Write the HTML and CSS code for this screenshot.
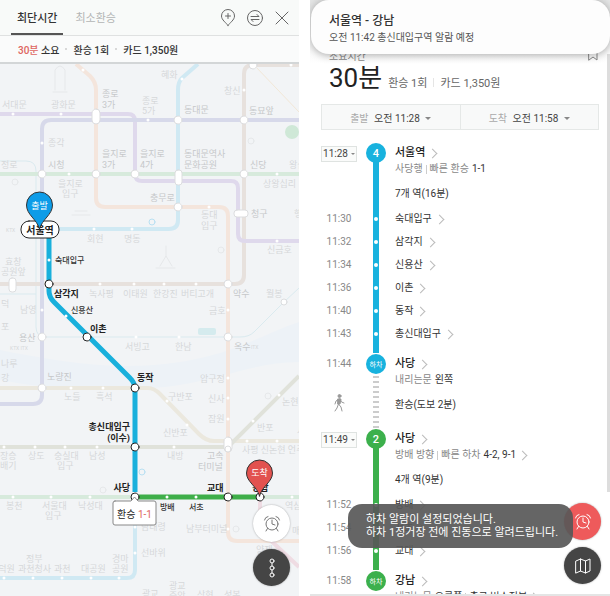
FILE: index.html
```html
<!DOCTYPE html>
<html lang="ko">
<head>
<meta charset="utf-8">
<meta name="viewport" content="width=device-width, initial-scale=1">
<title>지하철 경로</title>
<link rel="stylesheet" href="styles.css">
</head>
<body>
<main class="app">
  <section class="panel map-panel">
    <header class="tabs">
      <nav class="tab-list">
        <button class="tab is-active" type="button">최단시간</button>
        <button class="tab" type="button">최소환승</button>
      </nav>
      <div class="tools">
        <button class="tool" type="button" aria-label="경유지 추가">
          <svg width="16" height="18" viewBox="0 0 16 18"><path d="M8 16.500 C6 13.500 1.500 11 1.500 7 A6.500 6.500 0 0 1 14.500 7 C14.500 11 10 13.500 8 16.500Z M8 4.500v5M5.500 7h5"/></svg>
        </button>
        <button class="tool" type="button" aria-label="출발 도착 바꾸기">
          <svg width="18" height="18" viewBox="0 0 18 18"><circle cx="9" cy="9" r="7.500"/><path d="M5 7.500h8l-2-2M13 10.500H5l2 2"/></svg>
        </button>
        <button class="tool" type="button" aria-label="닫기">
          <svg width="16" height="16" viewBox="0 0 16 16"><path d="M2 2l12 12M14 2L2 14"/></svg>
        </button>
      </div>
    </header>
    <p class="summary"><span><em>30분</em> 소요</span><i class="dot"></i><span>환승 1회</span><i class="dot"></i><span>카드 1,350원</span></p>
    <div class="map">
      <svg class="map-canvas" viewBox="0 64 299 532" preserveAspectRatio="xMidYMin slice">
        <path class="river" d="M0 350C60 362 120 372 180 362S260 335 299 322V362C250 362 210 385 150 388S40 388 0 380Z"/>
        <g class="rails">
          <path class="thin aqua" d="M0 161H26Q36 161 36 171V327Q36 337 46 337H240Q249 337 254 332L284 302L299 288M0 294H36"/>
          <path class="thin gold" d="M255 66L299 112"/>
          <path class="brown" d="M299 65H253Q244 65 244 74V275Q244 284 235 284H0"/>
          <path class="violet" d="M0 114H128Q135 114 135 121V174Q135 181 142 181H231Q238 181 238 188V234Q238 241 245 241H299"/>
          <path class="indigo" d="M299 120H51Q42 120 42 129V395Q42 404 33 404H0"/>
          <path class="orange" d="M76 64L90 76Q96 82 96 90V198Q96 207 105 207H219Q228 207 228 216V532Q228 541 237 541H299"/>
          <path class="sky" d="M198 64L182 78Q178 82 178 90V220Q178 229 169 229H58"/>
          <path class="green" d="M0 174H299M0 497H135M260 497H299"/>
          <path class="sand" d="M0 388H148Q154 388 160 394L199 434Q206 441 214 441H299"/>
          <path class="olive" d="M0 447H228L299 376"/>
          <path class="sky" d="M135 497V570Q135 578 127 578H0"/>
          <path class="pink" d="M260 497V524Q260 530 266 536L299 567"/>
        </g>
        <g class="faint-stop">
          <rect x="92" y="109" width="8" height="15" rx="4"/><circle cx="178" cy="120" r="4"/><circle cx="244" cy="120" r="4"/><circle cx="253" cy="65" r="4"/>
          <circle cx="42" cy="174" r="4"/><circle cx="96" cy="174" r="4"/><circle cx="135" cy="174" r="4"/><rect x="175" y="170" width="7" height="15" rx="3"/><circle cx="244" cy="174" r="4"/>
          <circle cx="178" cy="207" r="4"/><rect x="234" y="210" width="14" height="7" rx="3"/><circle cx="228" cy="284" r="4"/><rect x="9" y="278" width="7" height="14" rx="3"/>
          <circle cx="42" cy="337" r="4"/><circle cx="228" cy="337" r="4"/><circle cx="42" cy="388" r="4"/><rect x="224" y="437" width="8" height="15" rx="4"/><circle cx="284" cy="302" r="3"/><circle cx="228" cy="449" r="3"/>
        </g>
        <path class="faint-dot" d="M13 114h0M61 114h0M148 120h0M83 70h0M182 79h0M244 90h0M291 65h0M42 143h0M69 174h0M277 174h0M209 207h0M94 229h0M132 229h0M277 241h0M100 284h0M134 284h0M164 284h0M196 284h0M42 310h0M228 310h0M228 378h0M228 398h0M228 419h0M136 337h0M179 337h0M71 388h0M103 388h0M167 401h0M187 425h0M253 421h0M279 395h0M247 441h0M277 441h0M4 447h0M35 447h0M65 447h0M97 447h0M174 447h0M13 497h0M51 497h0M90 497h0M292 497h0M135 527h0M135 553h0M4 578h0M33 578h0M62 578h0M91 578h0M119 578h0M228 529h0"/>
        <g class="landmark">
          <path d="M55 90V70q5-8 10 0V90M53 92h14M72 215h18M75 211h12M166 256v-10M160 266l6-10 6 10M156 268h19"/>
          <circle cx="251" cy="141" r="3"/><circle cx="221" cy="250" r="3"/><circle cx="15" cy="182" r="3"/><circle cx="103" cy="490" r="3"/><circle cx="268" cy="396" r="3"/><circle cx="236" cy="529" r="3"/>
          <circle class="blue" cx="152" cy="222" r="3"/><circle class="blue" cx="142" cy="472" r="3"/><rect class="park" x="198" y="328" width="18" height="7" rx="2"/>
          <circle class="tree" cx="292" cy="132" r="7"/>
        </g>
        <g class="faint">
          <text x="2" y="108">서대문</text><text x="51" y="108">광화문</text><text class="mid" x="102" y="97">종로</text><text class="mid" x="102" y="108">3가</text><text x="142" y="104">종로</text><text x="142" y="114">5가</text>
          <text x="161" y="78">혜화</text><text class="mid" x="184" y="113">동대문</text><text x="224" y="94">창신</text><text class="mid" x="249" y="114">동묘앞</text><text x="48" y="146">종각</text>
          <text class="mid" x="102" y="157">을지로</text><text class="mid" x="102" y="168">3가</text><text class="mid" x="140" y="157">을지로</text><text class="mid" x="140" y="168">4가</text><text class="mid" x="184" y="157">동대문역사</text><text class="mid" x="184" y="168">문화공원</text>
          <text x="1" y="168">정로</text><text class="mid" x="48" y="168">시청</text><text class="mid" x="250" y="168">신당</text><text x="289" y="168">왕십</text><text x="58" y="187">을지로</text><text x="62" y="197">입구</text><text x="263" y="187">상왕십리</text>
          <text class="mid" x="150" y="201">충무로</text><text x="201" y="218">동대</text><text x="201" y="229">입구</text><text class="mid" x="251" y="217">청구</text><text x="294" y="217">행</text><text x="87" y="242">회현</text><text x="124" y="242">명동</text><text x="267" y="253">신금호</text><text class="tiny" x="6" y="232">KTX</text>
          <text x="5" y="265">효창</text><text x="1" y="275">공원앞</text><text x="89" y="297">녹사평</text><text x="123" y="297">이태원</text><text x="153" y="297">한강진</text><text x="181" y="297">버티고개</text><text class="mid" x="233" y="297">약수</text><text x="266" y="297">월봉</text>
          <text x="1" y="307">덕</text><text x="20" y="313">남영</text><text x="1" y="330">포</text><text class="mid" x="19" y="341">용산</text><text class="tiny" x="10" y="350">KTX ITX</text><text x="209" y="314">금호</text><text x="125" y="350">서빙고</text><text x="175" y="350">한남</text><text class="mid" x="234" y="350">옥수</text><text class="tiny" x="251" y="349">ITX</text>
          <text x="1" y="367">나루</text><text x="1" y="381">강</text><text class="mid" x="47" y="380">노량진</text><text x="64" y="400">노들</text><text x="96" y="400">흑석</text><text x="168" y="400">구반포</text><text x="200" y="382">압구정</text><text x="208" y="402">신사</text><text x="208" y="422">잠원</text><text x="163" y="436">신반포</text><text x="257" y="431">반포</text><text x="282" y="405">논현</text><text x="297" y="434">사</text>
          <text x="242" y="453">사평 신논현 언주</text><text x="0" y="459">장승</text><text x="0" y="469">배기</text><text x="28" y="459">상도</text><text x="54" y="459">숭실대</text><text x="57" y="469">입구</text><text x="89" y="459">남성</text><text x="167" y="459">내방</text><text class="mid" x="207" y="459">고속</text><text class="mid" x="198" y="470">터미널</text>
          <text x="6" y="509">봉천</text><text x="42" y="509">서울대</text><text x="45" y="519">입구</text><text x="78" y="509">낙성대</text><text x="141" y="530">남태령</text><text x="141" y="556">선바위</text><text x="186" y="532">남부터미널</text><text x="285" y="509">역삼</text><text x="256" y="553">양재</text><text x="292" y="534">매</text>
          <text x="26" y="562">정부</text><text x="18" y="572">과천청사</text><text x="-10" y="572">인덕원</text><text x="54" y="572">과천</text><text x="81" y="572">대공원</text><text x="112" y="562">경마</text><text x="112" y="572">공원</text><text x="142" y="597">광교</text><text x="169" y="589">광교</text><text x="169" y="599">중앙</text><text x="197" y="598">상현</text><text x="224" y="598">성복</text>
        </g>
        <path class="route blue" d="M49 235V291Q49 297 54 302L130 378Q135 383 135 389V492"/>
        <path class="route lime" d="M135 497H260"/>
        <path class="route-dot" d="M49 260h0M66 316h0M167 497h0M196 497h0"/>
        <g class="stop"><circle cx="49" cy="284" r="4"/><circle cx="87" cy="337" r="4"/><circle cx="135" cy="388" r="4"/><circle cx="135" cy="447" r="4"/><circle cx="135" cy="497" r="4"/><circle cx="228" cy="497" r="4"/><circle cx="260" cy="497" r="4"/></g>
        <g class="label">
          <text class="small" x="55" y="263">숙대입구</text><text x="54" y="297">삼각지</text><text class="small" x="71" y="313">신용산</text><text x="90" y="332">이촌</text><text x="137" y="381">동작</text>
          <text class="end" x="130" y="430">총신대입구</text><text class="end" x="130" y="441">(이수)</text><text class="end" x="130" y="491">사당</text><text class="small" x="160" y="510">방배</text><text class="small" x="189" y="510">서초</text><text x="207" y="491">교대</text><text x="252" y="491">강남</text>
        </g>
        <rect class="origin" x="21" y="221" width="38" height="17" rx="8"/><text class="origin-name" x="40" y="234">서울역</text>
        <path class="pin blue" d="M39.500 229C37 219 26.500 215 26.500 205A13 13 0 0 1 52.500 205C52.500 215 42 219 39.500 229Z"/><text class="pin-name" x="39.500" y="209">출발</text>
        <path class="pin red" d="M259.500 496C257 486 246.500 482 246.500 473A13 13 0 0 1 272.500 473C272.500 482 262 486 259.500 496Z"/><text class="pin-name" x="259.500" y="476">도착</text>
        <path class="callout" d="M115 501H131L134.500 497L138 501H154Q156 501 156 503V523Q156 525 154 525H115Q113 525 113 523V503Q113 501 115 501Z"/>
        <text class="callout-name" x="134.500" y="518">환승 <tspan>1-1</tspan></text>
      </svg>
      <div class="fabs map-fabs">
        <button class="fab light" type="button" aria-label="하차 알람"><svg width="18" height="18" viewBox="0 0 18 18"><circle cx="9" cy="9" r="6"/><path d="M9 5v4l3 1M1.500 5Q2 2 5 1.500M16.500 5Q16 2 13 1.500M4.500 13.500L3 16M13.500 13.500L15 16"/></svg></button>
        <button class="fab dark" type="button" aria-label="경로 목록"><svg width="10" height="22" viewBox="0 0 10 22"><circle cx="5" cy="4" r="2"/><circle cx="5" cy="11" r="2"/><circle cx="5" cy="18" r="2"/><path d="M5 6v3M5 13v3"/></svg></button>
      </div>
    </div>
  </section>

  <section class="panel detail-panel">
    <aside class="notice"><h2>서울역 - 강남</h2><p>오전 11:42 총신대입구역 알람 예정</p></aside>
    <div class="caption"><span>소요시간</span><svg width="10" height="12" viewBox="0 0 10 12"><path d="M1 1h8v10L5 8L1 11Z"/></svg></div>
    <div class="total"><strong>30분</strong><span>환승 1회</span><i></i><span>카드 1,350원</span></div>
    <div class="times">
      <button type="button"><span>출발</span> 오전 11:28 <i class="caret"></i></button>
      <button type="button"><span>도착</span> 오전 11:58 <i class="caret"></i></button>
    </div>
    <ol class="steps">
      <li class="step head blue board"><button class="time boxed" type="button">11:28<i class="caret"></i></button><div class="track"><b class="badge">4</b></div><div class="info"><a href="#">서울역</a><p class="sub">사당행<i></i>빠른 환승 <b>1-1</b></p><p class="leg">7개 역(16분)</p></div></li>
      <li class="step blue"><time class="time">11:30</time><div class="track"></div><div class="info"><a href="#">숙대입구</a></div></li>
      <li class="step blue"><time class="time">11:32</time><div class="track"></div><div class="info"><a href="#">삼각지</a></div></li>
      <li class="step blue"><time class="time">11:34</time><div class="track"></div><div class="info"><a href="#">신용산</a></div></li>
      <li class="step blue"><time class="time">11:36</time><div class="track"></div><div class="info"><a href="#">이촌</a></div></li>
      <li class="step blue"><time class="time">11:40</time><div class="track"></div><div class="info"><a href="#">동작</a></div></li>
      <li class="step blue before-exit"><time class="time">11:43</time><div class="track"></div><div class="info"><a href="#">총신대입구</a></div></li>
      <li class="step head blue walk"><div class="time-col"><time class="time">11:44</time><svg width="12" height="18" viewBox="0 0 12 18"><circle class="solid" cx="6.500" cy="2" r="1.500"/><path class="solid" d="M5 5h3l-1 5h-2Z"/><path d="M6.500 5L5.500 10L8 13L9 17M5.500 10L4 14L2 17M6 5L3 7L2 10M7 5L8.500 8L11 9"/></svg></div><div class="track"><b class="badge off">하차</b></div><div class="info"><a href="#">사당</a><p class="sub">내리는문 <b>왼쪽</b></p><p class="leg">환승(도보 2분)</p></div></li>
      <li class="step head green board"><button class="time boxed" type="button">11:49<i class="caret"></i></button><div class="track"><b class="badge">2</b></div><div class="info"><a href="#">사당</a><p class="sub more">방배 방향<i></i>빠른 하차 <b>4-2, 9-1</b></p><p class="leg">4개 역(9분)</p></div></li>
      <li class="step green"><time class="time">11:52</time><div class="track"></div><div class="info"><a href="#">방배</a></div></li>
      <li class="step green"><time class="time">11:54</time><div class="track"></div><div class="info"><a href="#">서초</a></div></li>
      <li class="step green before-exit"><time class="time">11:56</time><div class="track"></div><div class="info"><a href="#">교대</a></div></li>
      <li class="step head green last"><time class="time">11:58</time><div class="track"><b class="badge off">하차</b></div><div class="info"><a href="#">강남</a><p class="sub more">내리는문 <b>오른쪽</b><i></i><b>출구 버스정보</b></p></div></li>
    </ol>
    <div class="fabs detail-fabs">
      <button class="fab red" type="button" aria-label="하차 알람"><svg width="18" height="18" viewBox="0 0 18 18"><circle cx="9" cy="9" r="6"/><path d="M9 5v4l3 1M1.500 5Q2 2 5 1.500M16.500 5Q16 2 13 1.500M4.500 13.500L3 16M13.500 13.500L15 16"/></svg></button>
      <button class="fab dark" type="button" aria-label="지도 보기"><svg width="18" height="18" viewBox="0 0 18 18"><path d="M2 4L6.500 2L11.500 4L16 2V14L11.500 16L6.500 14L2 16ZM6.500 2V14M11.500 4V16"/></svg></button>
    </div>
    <div class="toast" role="status">하차 알람이 설정되었습니다.<br>하차 1정거장 전에 진동으로 알려드립니다.</div>
    <i class="scrollbar"></i>
  </section>
</main>
</body>
</html>
```

FILE: styles.css
```css
* { box-sizing: border-box; }
body, h2, p, ol { margin: 0; padding: 0; }
body { font-family: Roboto, "Noto Sans CJK KR", sans-serif; color: #333; background: #fff; }
button { font: inherit; color: inherit; border: 0; padding: 0; background: none; }
a { color: inherit; text-decoration: none; }
svg { display: block; fill: none; stroke: currentColor; stroke-linecap: round; stroke-linejoin: round; }
i { font-style: normal; }

.app { display: grid; grid-template-columns: 299fr 300fr; column-gap: 11px; height: 100vh; overflow: hidden; }
.panel { position: relative; display: flex; flex-direction: column; min-width: 0; min-height: 0; overflow: hidden; }

.tabs { flex: none; display: flex; justify-content: space-between; height: 36px; padding: 0 9px 0 11px; background: #f8faf9; border-bottom: 1px solid #dfe1e1; }
.tab-list { display: flex; gap: 6px; }
.tab { padding: 0 6px; font-size: 11px; color: #b3b5b5; border-bottom: 2px solid transparent; }
.tab.is-active { color: #333; font-weight: 500; border-bottom-color: #555; }
.tools { display: flex; align-items: center; gap: 10px; color: #666; }

.summary { flex: none; display: flex; align-items: center; gap: 6px; height: 28px; padding: 0 18px; font-size: 10px; font-weight: 500; background: #fafbfb; border-bottom: 2px solid #d3d6d7; }
.summary em { font-style: normal; color: #de6660; }
.dot { width: 2px; height: 2px; border-radius: 1px; background: #ccc; }

.map { position: relative; flex: 1; min-height: 0; background: #f2f4f6; }
.map-canvas { width: 100%; height: 100%; }
.map-canvas text { stroke: none; fill: #222; font-size: 9px; }
.river { fill: #edf2f7; stroke: none; }
.rails { opacity: 0.9; }
.rails path { stroke-width: 4; stroke-linecap: butt; }
.rails .thin { stroke-width: 1; }
.rails .aqua { stroke: #d8eaef; }
.rails .gold { stroke: #f1e6d4; }
.rails .brown { stroke: #e6dfdb; }
.rails .violet { stroke: #ded7ec; }
.rails .indigo { stroke: #d5d7e9; }
.rails .orange { stroke: #f5e4da; }
.rails .sky { stroke: #cde8f3; }
.rails .green { stroke: #d5eada; }
.rails .sand { stroke: #ebe7dc; }
.rails .olive { stroke: #dfe1d8; }
.rails .pink { stroke: #efdae1; }
.faint-stop { fill: #fff; stroke: #dcdddf; }
.faint-dot { stroke: #fff; stroke-width: 3; }
.landmark { stroke: #e6e8ea; }
.landmark .blue { stroke: #b9e0f2; }
.landmark .park { fill: #d5ebee; stroke: none; }
.landmark .tree { fill: #cfe8d7; stroke: none; }
.map-canvas .faint text { fill: #d6d8da; }
.map-canvas .faint .mid { fill: #c6c8ca; }
.map-canvas .faint .tiny { font-size: 5px; }
.route { stroke-width: 5; stroke-linecap: butt; }
.route.blue { stroke: #19b0dc; }
.route.lime { stroke: #3eae49; }
.route-dot { stroke: #fff; stroke-width: 3; }
.stop { fill: #fff; stroke: #222; }
.map-canvas .label text { font-weight: 700; }
.map-canvas .label .small { font-size: 8px; font-weight: 500; fill: #333; }
.label .end { text-anchor: end; }
.origin { fill: #fff; stroke: #222; }
.map-canvas .origin-name { font-size: 10px; font-weight: 700; text-anchor: middle; }
.pin { stroke: #333; }
.pin.blue { fill: #0d9ce8; }
.pin.red { fill: #e2524f; }
.map-canvas .pin-name { fill: #fff; text-anchor: middle; }
.callout { fill: #fff; stroke: #888; }
.map-canvas .callout-name { font-size: 10px; text-anchor: middle; }
.callout-name tspan { fill: #de6660; }

.fabs { position: absolute; display: flex; flex-direction: column; gap: 7px; }
.map-fabs { right: 9px; bottom: 10px; }
.detail-fabs { right: 9px; bottom: 10px; }
.fab { display: grid; place-items: center; width: 37px; height: 37px; border-radius: 50%; color: #fff; box-shadow: 0 0 2px #0005; }
.fab.light { color: #777; background: #fff; }
.fab.dark { background: #454545; }
.fab.red { background: #ee5a5b; }

.detail-panel { background: linear-gradient(#e4e5e5, #fff 64px); border-bottom: 2px solid #e4e5e5; }
.notice { position: absolute; z-index: 2; top: 0; left: 1px; right: 0; height: 54px; padding: 13px 18px 0; background: #fdfdfd; border-radius: 18px; box-shadow: 0 1px 9px #0005; }
.notice h2 { font-size: 12px; line-height: 16px; font-weight: 500; }
.notice p { font-size: 10px; line-height: 18px; color: #555; }
.caption { flex: none; display: flex; justify-content: space-between; align-items: center; margin-top: 48px; height: 14px; padding: 0 12px 0 19px; font-size: 10px; color: #888; }
.total { flex: none; display: flex; align-items: baseline; gap: 6px; height: 42px; padding-left: 19px; font-size: 11px; line-height: 32px; color: #666; }
.total strong { font-size: 26px; font-weight: 400; color: #222; }
.total i { width: 1px; height: 9px; background: #e5e5e5; }
.times { flex: none; display: flex; height: 26px; margin: 0 11px; border: 1px solid #e5e8e7; background: #f8f9f9; }
.times button { flex: 1; font-size: 10px; color: #444; }
.times button + button { border-left: 1px solid #e5e8e7; }
.times span { margin-right: 3px; color: #aaa; }
.caret { display: inline-block; border: 3px solid transparent; border-top-color: #888; border-bottom: 0; margin-left: 3px; vertical-align: middle; }

.steps { list-style: none; padding: 12px 0 0 11px; }
.step { --line: #18b2de; display: grid; grid-template-columns: 36px 38px 1fr; height: 23px; }
.step.green { --line: #3cb04c; }
.step.head { height: 66px; }
.step.walk { height: 75px; }
.step.before-exit { height: 30px; }
.time { justify-self: center; font-size: 10px; line-height: 22px; color: #888; }
.time.boxed { width: 36px; height: 16px; margin-top: 4px; line-height: 14px; color: #444; border: 1px solid #dfe3e1; background: #fafbfa; }
.boxed .caret { border-width: 2px 2px 0; }
.time-col { display: flex; flex-direction: column; align-items: center; gap: 19px; color: #999; }
.solid { fill: currentColor; }
.track { position: relative; justify-self: center; width: 6px; background: var(--line); }
.track::before { content: ""; position: absolute; top: 9px; left: 1px; width: 4px; height: 4px; border-radius: 50%; background: #fff; }
.head .track::before { display: none; }
.board .track { background: linear-gradient(transparent 10px, var(--line) 10px); }
.badge { position: absolute; top: 1px; left: -7px; display: grid; place-items: center; width: 20px; height: 20px; border-radius: 50%; font-size: 11px; font-weight: 500; color: #fff; background: var(--line); }
.badge.off { font-size: 7px; font-weight: 400; }
.walk .track { background: repeating-linear-gradient(#fff 0 3px, #ccc 3px 5px); }
.last .track { background: none; }
.info { min-width: 0; white-space: nowrap; }
.info a { display: flex; align-items: center; gap: 4px; font-size: 10px; line-height: 22px; }
.head .info a { font-size: 11px; font-weight: 500; color: #222; }
.info a::after, .more::after { content: ""; width: 6px; height: 6px; border: solid #bbb; border-width: 1px 1px 0 0; transform: rotate(45deg); }
.sub { display: flex; align-items: center; gap: 3px; font-size: 10px; line-height: 14px; margin-top: -2px; color: #888; }
.sub b { font-weight: 400; color: #333; }
.sub i { width: 1px; height: 9px; background: #ccc; }
.leg { margin-top: 9px; font-size: 10px; line-height: 18px; }

.toast { position: absolute; z-index: 1; left: 38px; right: 37px; bottom: 46px; padding: 9px 18px; border-radius: 14px; font-size: 11px; line-height: 13px; color: #fff; background: #585858eb; white-space: nowrap; }
.scrollbar { position: absolute; top: 54px; right: 0; width: 3px; height: 438px; background: #ddd; }
```
